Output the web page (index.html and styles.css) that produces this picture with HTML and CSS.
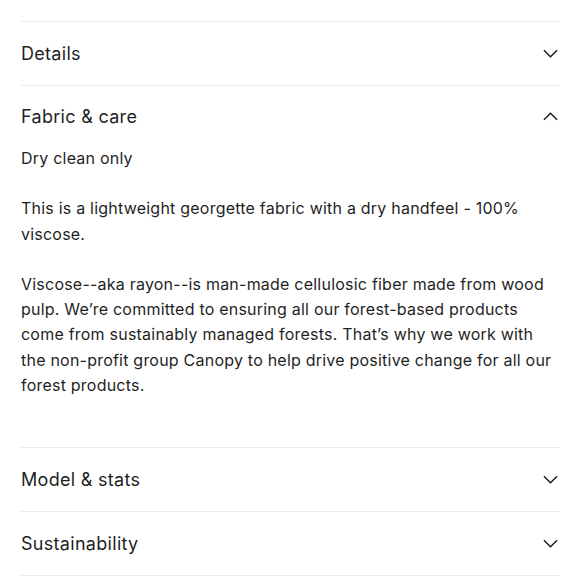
FILE: index.html
```html
<html><head>
<link rel="stylesheet" href="styles.css">
</head>
<body>
<div class="accordion">
    <div class="acc-item">
        <div class="acc-header">
            <span class="acc-title">Details</span>
            <svg class="chevron" viewBox="0 0 16 9" fill="none" stroke="#1a1a1a" stroke-width="1.5"><path d="M1 1l7 7 7-7"></path></svg>
        </div>
    </div>
    <div class="acc-item open">
        <div class="acc-header">
            <span class="acc-title">Fabric &amp; care</span>
            <svg class="chevron" viewBox="0 0 16 9" fill="none" stroke="#1a1a1a" stroke-width="1.5"><path d="M1 8l7-7 7 7"></path></svg>
        </div>
        <div class="acc-body">
            <p>Dry clean only</p>
            <p>This is a lightweight georgette fabric with a dry handfeel - 100% viscose.</p>
            <p>Viscose--aka rayon--is man-made cellulosic fiber made from wood pulp. We’re committed to ensuring all our forest-based products come from sustainably managed forests. That’s why we work with the non-profit group Canopy to help drive positive change for all our forest products.</p>
        </div>
    </div>
    <div class="acc-item">
        <div class="acc-header">
            <span class="acc-title">Model &amp; stats</span>
            <svg class="chevron" viewBox="0 0 16 9" fill="none" stroke="#1a1a1a" stroke-width="1.5"><path d="M1 1l7 7 7-7"></path></svg>
        </div>
    </div>
    <div class="acc-item">
        <div class="acc-header">
            <span class="acc-title">Sustainability</span>
            <svg class="chevron" viewBox="0 0 16 9" fill="none" stroke="#1a1a1a" stroke-width="1.5"><path d="M1 1l7 7 7-7"></path></svg>
        </div>
    </div>
</div>
</body>
</html>
```

FILE: styles.css
```css
body {
    margin: 0;
    padding: 21px 20px 0 21px;
    background: #ffffff;
    font-family: Inter, "Liberation Sans", sans-serif;
    color: #1f1f1f;
}

.accordion {
    border-top: 1px solid #ebebeb;
}

.acc-item {
    border-bottom: 1px solid #ebebeb;
}

.acc-header {
    height: 63px;
    display: flex;
    align-items: center;
    justify-content: space-between;
}

.acc-title {
    font-size: 18px;
    letter-spacing: 0.3px;
}

.chevron {
    width: 15px;
    height: 9px;
    margin-right: 2px;
}

.open .acc-header {
    height: 60px;
}

.acc-body {
    padding-bottom: 49px;
}

.acc-body p {
    margin: 0 0 25.2px;
    font-size: 16px;
    line-height: 25.2px;
    letter-spacing: 0.22px;
}

.acc-body p:last-child {
    margin-bottom: 0;
}
```
